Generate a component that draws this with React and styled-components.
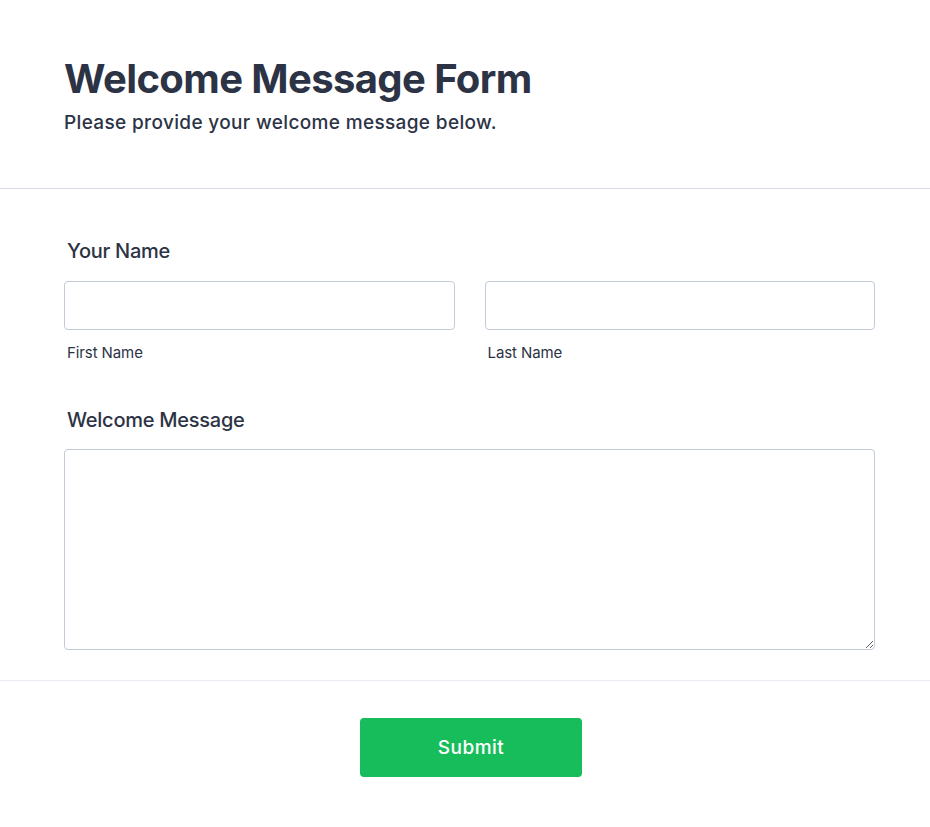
import React from 'react';
import styled, { createGlobalStyle } from 'styled-components';

// --- GLOBAL STYLES ---
const GlobalStyle = createGlobalStyle`
    body {
        margin: 0;
        font-family: Inter, "Noto Sans", sans-serif;
        background-color: #ffffff;
        color: #2c3345;
    }
    * { box-sizing: border-box; }
`;

// --- Styled Components ---
const Page = styled.div`
    width: 100%;
    min-height: 100vh;
    background-color: #ffffff;
`;

const Header = styled.header`
    padding: 55px 64px 53.5px;
    border-bottom: 1px solid #d8dae9;
`;

const Title = styled.h1`
    margin: 0 0 7.5px;
    font-size: 40px;
    line-height: 48px;
    font-weight: 700;
    letter-spacing: -0.6px;
    color: #2c3345;
`;

const Subtitle = styled.p`
    margin: 0;
    font-size: 19px;
    line-height: 24px;
    font-weight: 500;
    letter-spacing: 0.35px;
    color: #2c3345;
`;

const Body = styled.div`
    padding: 50px 55px 30px 64px;
    display: flex;
    flex-direction: column;
    gap: 46px;
    border-bottom: 1px solid #eaebf2;
`;

const Field = styled.div`
    display: flex;
    flex-direction: column;
`;

const Label = styled.label`
    font-size: 20px;
    line-height: 24px;
    font-weight: 500;
    letter-spacing: -0.25px;
    color: #2c3345;
    padding-left: 3px;
    margin-bottom: 17.5px;
`;

const Row = styled.div`
    display: grid;
    grid-template-columns: 1fr 1fr;
    gap: 30px;
`;

const Column = styled.div`
    display: flex;
    flex-direction: column;
`;

const Input = styled.input`
    height: 49px;
    border: 1px solid #c3cad8;
    border-radius: 4px;
    padding: 0 12px;
    font-family: inherit;
    font-size: 16px;
    color: #2c3345;
    outline: none;
`;

const SubLabel = styled.span`
    margin-top: 14px;
    padding-left: 3px;
    font-size: 15px;
    line-height: 18px;
    letter-spacing: -0.1px;
    color: #2c3345;
`;

const TextArea = styled.textarea`
    height: 201px;
    border: 1px solid #c3cad8;
    border-radius: 4px;
    padding: 10px 12px;
    font-family: inherit;
    font-size: 16px;
    color: #2c3345;
    outline: none;
    resize: vertical;
`;

const Footer = styled.div`
    display: flex;
    justify-content: center;
    padding: 37px 0 50px;
`;

const SubmitButton = styled.button`
    width: 222px;
    height: 59px;
    border: none;
    border-radius: 4px;
    background-color: #18bd5b;
    color: #ffffff;
    font-family: inherit;
    font-size: 19px;
    font-weight: 500;
    letter-spacing: 0.45px;
    cursor: pointer;
    margin-left: 12px;
`;

const App = () => {
    return (
        <Page>
            <GlobalStyle />
            {/* --- HEADER --- */}
            <Header>
                <Title>Welcome Message Form</Title>
                <Subtitle>Please provide your welcome message below.</Subtitle>
            </Header>

            {/* --- FIELDS --- */}
            <Body>
                <Field>
                    <Label>Your Name</Label>
                    <Row>
                        <Column>
                            <Input type="text" />
                            <SubLabel>First Name</SubLabel>
                        </Column>
                        <Column>
                            <Input type="text" />
                            <SubLabel>Last Name</SubLabel>
                        </Column>
                    </Row>
                </Field>
                <Field>
                    <Label>Welcome Message</Label>
                    <TextArea />
                </Field>
            </Body>

            {/* --- SUBMIT --- */}
            <Footer>
                <SubmitButton type="submit">Submit</SubmitButton>
            </Footer>
        </Page>
    );
};

export default App;
